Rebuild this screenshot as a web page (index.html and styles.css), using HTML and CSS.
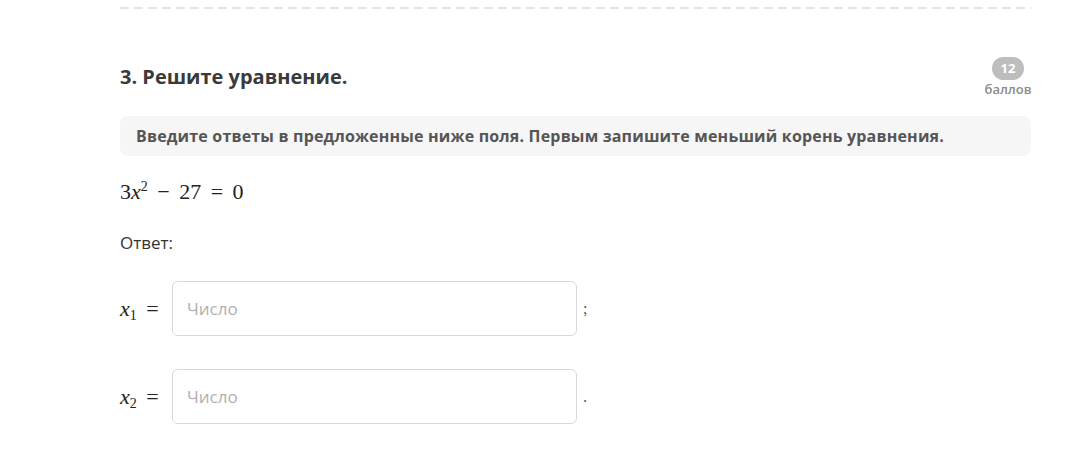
FILE: index.html
```html
<!DOCTYPE html>
<html lang="ru">

    <head>
        <meta charset="UTF-8">
        <meta name="viewport" content="width=device-width, initial-scale=1.0">
        <title>Задание 3</title>
        <link rel="stylesheet" href="styles.css">
    </head>

    <body>
        <div class="task">
            <div class="divider"></div>

            <div class="task-head">
                <h2 class="task-title">3. Решите уравнение.</h2>
                <div class="points">
                    <span class="points-count">12</span>
                    <span class="points-label">баллов</span>
                </div>
            </div>

            <div class="hint">
                Введите ответы в предложенные ниже поля. Первым запишите меньший корень уравнения.
            </div>

            <p class="equation">
                <span class="num">3</span><i>x</i><sup>2</sup>
                <span class="op">&minus;</span>
                <span class="num">27</span>
                <span class="op">=</span>
                <span class="num">0</span>
            </p>

            <p class="answer-label">Ответ:</p>

            <div class="answer-row">
                <span class="var"><i>x</i><sub>1</sub> <span class="op">=</span></span>
                <input class="answer-input" type="text" placeholder="Число">
                <span class="sep">;</span>
            </div>

            <div class="answer-row">
                <span class="var"><i>x</i><sub>2</sub> <span class="op">=</span></span>
                <input class="answer-input" type="text" placeholder="Число">
                <span class="sep">.</span>
            </div>
        </div>
    </body>

</html>
```

FILE: styles.css
```css
* {
    margin: 0;
    padding: 0;
    box-sizing: border-box;
}

body {
    background-color: #fff;
    font-family: "Open Sans", "Noto Sans", sans-serif;
    color: #333;
}

.task {
    width: 911px;
    margin-left: 120px;
    padding-top: 7px;
}

/* dashed separator between tasks */
.divider {
    height: 2px;
    background: repeating-linear-gradient(90deg, #e4e4e4 0 9px, transparent 9px 14px);
}

.task-head {
    display: flex;
    justify-content: space-between;
    align-items: flex-start;
    margin-top: 48px;
}

.task-title {
    margin-top: 5px;
    font-size: 20px;
    font-weight: 700;
    color: #3a3a3a;
    line-height: 30px;
}

.points {
    display: flex;
    flex-direction: column;
    align-items: center;
    width: 46px;
}

.points-count {
    width: 32px;
    height: 23px;
    border-radius: 12px;
    background-color: #bdbdbd;
    color: #fff;
    font-size: 13px;
    font-weight: 700;
    line-height: 23px;
    text-align: center;
}

.points-label {
    font-size: 13px;
    font-weight: 600;
    color: #8a8a8a;
    line-height: 18px;
}

.hint {
    margin-top: 18px;
    height: 40px;
    padding: 0 16px;
    border-radius: 8px;
    background-color: #f6f6f6;
    color: #555;
    font-size: 16px;
    font-weight: 700;
    line-height: 40px;
    letter-spacing: 0.18px;
}

.equation,
.var {
    font-family: "Liberation Serif", "DejaVu Serif", serif;
    font-size: 22px;
    color: #222;
}

.equation {
    margin-top: 24px;
    line-height: 24px;
}

.equation sup {
    font-size: 14px;
    vertical-align: 8px;
    line-height: 0;
}

.op {
    margin: 0 4px;
}

.answer-label {
    margin-top: 28px;
    font-size: 17px;
    line-height: 22px;
    color: #333;
}

.answer-row {
    display: flex;
    align-items: center;
    margin-top: 27px;
}

.answer-row + .answer-row {
    margin-top: 33px;
}

.var {
    width: 52px;
    white-space: nowrap;
}

.var sub {
    font-size: 14px;
    vertical-align: -4px;
    line-height: 0;
}

.answer-input {
    width: 405px;
    height: 55px;
    padding: 0 14px;
    border: 1px solid #d9d9d9;
    border-radius: 6px;
    font-family: "Open Sans", "Noto Sans", sans-serif;
    font-size: 17px;
    color: #333;
    outline: none;
}

.answer-input::placeholder {
    color: #b0b0b0;
}

.sep {
    margin-left: 6px;
    font-family: "Liberation Serif", serif;
    font-size: 16px;
    color: #555;
}
```
